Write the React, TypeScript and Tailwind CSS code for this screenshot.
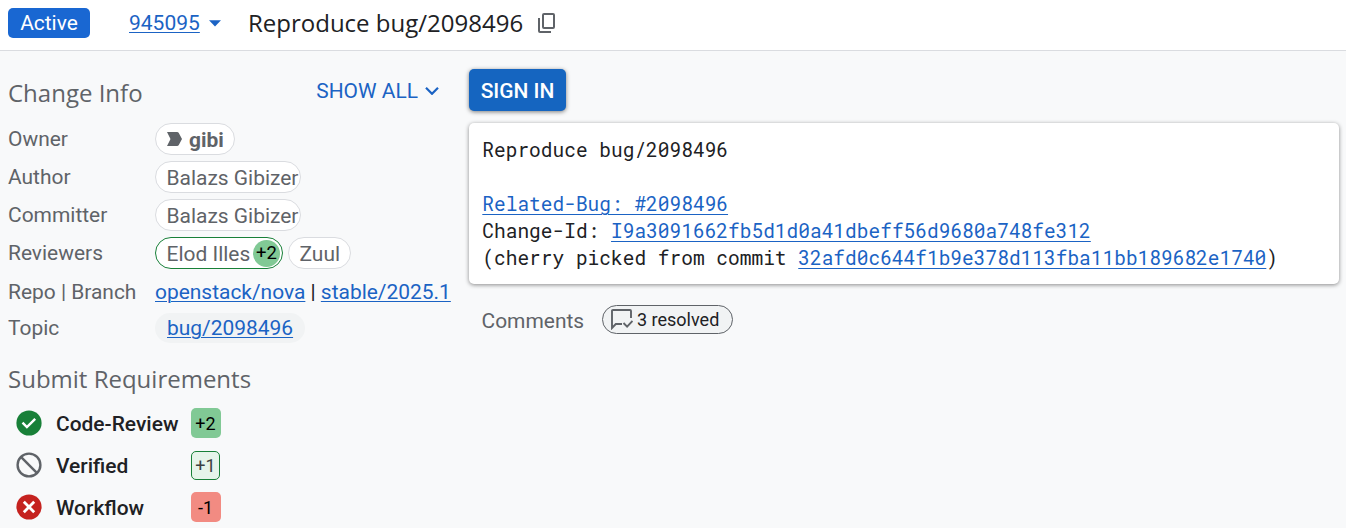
import type { ReactNode } from "react";

const link = "text-[#1b63c4] underline decoration-[1px] underline-offset-[2px]";
const monoLink = "text-[#1b63c4] underline decoration-[1px] underline-offset-[3px]";

function Row({ label, height, children }: { label: string; height: string; children: ReactNode }) {
  return (
    <div className={`flex items-center ${height}`}>
      <div className="w-[147px] shrink-0 leading-[30px]">{label}</div>
      {children}
    </div>
  );
}

function Person({ name, width }: { name: string; width: string }) {
  return (
    <div className={`flex h-8 items-center overflow-hidden rounded-full border border-[#dadce0] bg-white pt-0.5 pl-[10.5px] leading-[30px] ${width}`}>
      {name}
    </div>
  );
}

function Requirement({ icon, name, vote }: { icon: ReactNode; name: string; vote: ReactNode }) {
  return (
    <div className="flex h-[42px] items-center pl-4">
      {icon}
      <span className="ml-3.5 w-[135px] pt-0.5 font-medium leading-[30px] text-[#202124]">{name}</span>
      {vote}
    </div>
  );
}

const CheckCircle = () => (
  <svg className="h-[26px] w-[26px]" viewBox="0 0 26 26">
    <circle cx="13" cy="13" r="12.6" fill="#188038" />
    <path d="M6.5 12.7l4.4 4.4 8.3-8.3" fill="none" stroke="#fff" strokeWidth="2.4" />
  </svg>
);

const Blocked = () => (
  <svg className="h-[26px] w-[26px]" viewBox="0 0 26 26" fill="none" stroke="#5f6368" strokeWidth="2.4">
    <circle cx="13" cy="13" r="11.4" />
    <path d="M4.9 4.9l16.2 16.2" />
  </svg>
);

const CancelCircle = () => (
  <svg className="h-[26px] w-[26px]" viewBox="0 0 26 26">
    <circle cx="13" cy="13" r="12.6" fill="#c5221f" />
    <path d="M7.8 7.8l10.4 10.4M18.2 7.8L7.8 18.2" fill="none" stroke="#fff" strokeWidth="2.8" />
  </svg>
);

export default function App() {
  return (
    <div className="h-[528px] w-[1346px] overflow-hidden bg-[#f8f9fa] font-['Roboto',sans-serif] text-[20.95px] text-[#5f6368]">
      <header className="flex h-[51px] items-center border-b border-[#dadce0] bg-white pb-1 pl-2">
        <div className="flex h-[30px] w-[82px] items-center justify-center rounded-[5px] bg-[#1967d2] pt-0.5 text-white">Active</div>
        <a className={`ml-[39px] w-[71px] pt-0.5 text-[21px] ${link}`}>945095</a>
        <svg className="ml-[9px] h-[7px] w-3" viewBox="0 0 12 7">
          <path d="M0 .2h12L6 6.6z" fill="#1b63c4" />
        </svg>
        <h1 className="ml-[27px] w-[290px] whitespace-nowrap font-['Open_Sans',sans-serif] text-[24px] leading-9 text-[#202124]">Reproduce bug/2098496</h1>
        <svg className="h-5 w-[18px]" viewBox="0 0 18 20" fill="none" stroke="#5f6368" strokeWidth="2">
          <path d="M6 1h9q1 0 1 1v12q0 1-1 1H6q-1 0-1-1V2q0-1 1-1zM1 5v13q0 1 1 1h11" />
        </svg>
      </header>
      <main className="flex">
        <section className="w-[461px] shrink-0 pl-2">
          <div className="flex h-[68px] items-center justify-between pr-[22px]">
            <h2 className="pt-4 font-['Open_Sans',sans-serif] text-[24px] leading-9">Change Info</h2>
            <div className="flex items-center pt-3 text-[#1b63c4]">
              <span className="leading-[30px]">SHOW ALL</span>
              <svg className="ml-[7px] h-2 w-[14px]" viewBox="0 0 14 8" fill="none" stroke="#1b63c4" strokeWidth="2.2">
                <path d="M1 .8l6 6 6-6" />
              </svg>
            </div>
          </div>
          <Row label="Owner" height="h-[38px] mt-px">
            <div className="flex h-8 w-20 items-center rounded-full border border-[#dadce0] bg-white pl-[11px] font-bold">
              <svg className="h-[14px] w-[15px]" viewBox="0 0 15 14">
                <path d="M0 0h10q1.2 0 1.8 1L15 7l-3.2 6q-.6 1-1.8 1H0l3.5-7z" fill="#5f6368" />
              </svg>
              <span className="ml-[7px] pt-0.5 leading-[30px]">gibi</span>
            </div>
          </Row>
          <Row label="Author" height="h-[38px]"><Person name="Balazs Gibizer" width="w-[146px]" /></Row>
          <Row label="Committer" height="h-[38px]"><Person name="Balazs Gibizer" width="w-[146px]" /></Row>
          <Row label="Reviewers" height="h-[38px]">
            <div className="flex h-8 w-32 items-center rounded-full border border-[#188038] bg-white pl-[10.5px]">
              <span className="w-[86.5px] whitespace-nowrap pt-0.5 leading-[30px]">Elod Illes</span>
              <span className="flex h-[27px] w-[27px] shrink-0 items-center justify-center rounded-full bg-[#81c995] pt-px text-[18.5px] text-black">+2</span>
            </div>
            <div className="w-[5px]" />
            <Person name="Zuul" width="w-[63px]" />
          </Row>
          <Row label="Repo | Branch" height="h-[39px]">
            <span className="whitespace-nowrap leading-[30px] text-[#202124]">
              <a className={link}>openstack/nova</a> | <a className={link}>stable/2025.1</a>
            </span>
          </Row>
          <Row label="Topic" height="h-[34px]">
            <div className="flex h-[30px] w-[150px] items-center rounded-full bg-[#f1f3f4] pt-0.5 pl-3"><a className={link}>bug/2098496</a></div>
          </Row>
          <h2 className="mt-4 mb-[5px] font-['Open_Sans',sans-serif] text-[24px] leading-9">Submit Requirements</h2>
          <div className="-ml-2">
            <Requirement icon={<CheckCircle />} name="Code-Review" vote={<span className="flex h-[30px] w-[30px] items-center justify-center rounded-[5px] bg-[#81c995] pr-px text-[18px] text-black">+2</span>} />
            <Requirement icon={<Blocked />} name="Verified" vote={<span className="flex h-[29px] w-[29px] items-center justify-center rounded-[5px] border border-[#188038] bg-[#e6f4ea] text-[18px] text-[#3c4043]">+1</span>} />
            <Requirement icon={<CancelCircle />} name="Workflow" vote={<span className="flex h-[30px] w-[30px] items-center justify-center rounded-[5px] bg-[#f28b82] pr-px text-[18px] text-black">-1</span>} />
          </div>
        </section>
        <section className="pl-2 pt-[18px]">
          <button className="flex h-[42px] w-[97px] items-center justify-center rounded-[5px] bg-[#1565c0] pt-[3px] font-medium text-white shadow-[0_1px_4px_rgba(0,0,0,0.5)]">SIGN IN</button>
          <div className="mt-3 h-[161px] w-[870px] whitespace-pre rounded-[5px] bg-white pt-[13px] pl-[13.3px] font-['Roboto_Mono','DejaVu_Sans_Mono',monospace] text-[19.5px] leading-[27px] text-[#202124] shadow-[0_1px_4px_rgba(0,0,0,0.45)]">
            <div>Reproduce bug/2098496</div>
            <div className="mt-[27px]"><a className={monoLink}>Related-Bug: #2098496</a></div>
            <div>Change-Id: <a className={monoLink}>I9a3091662fb5d1d0a41dbeff56d9680a748fe312</a></div>
            <div>(cherry picked from commit <a className={monoLink}>32afd0c644f1b9e378d113fba11bb189682e1740</a>)</div>
          </div>
          <div className="mt-[17px] flex items-center pl-[12.5px]">
            <span className="w-[120.5px] pt-[5px]">Comments</span>
            <div className="flex h-[29px] w-[131px] items-center rounded-full border border-[#5f6368] bg-[#f1f3f4] pl-2 text-[18px] text-[#202124]">
              <svg className="h-[22px] w-[22px]" viewBox="0 0 22 22" fill="none" stroke="#5f6368" strokeWidth="1.9">
                <path d="M20 10V3q0-1-1-1H2q-1 0-1 1v17L4.8 16H11M12.5 15l3.6 3.6L21.5 13" />
              </svg>
              <span className="ml-1 whitespace-nowrap">3 resolved</span>
            </div>
          </div>
        </section>
      </main>
    </div>
  );
}
